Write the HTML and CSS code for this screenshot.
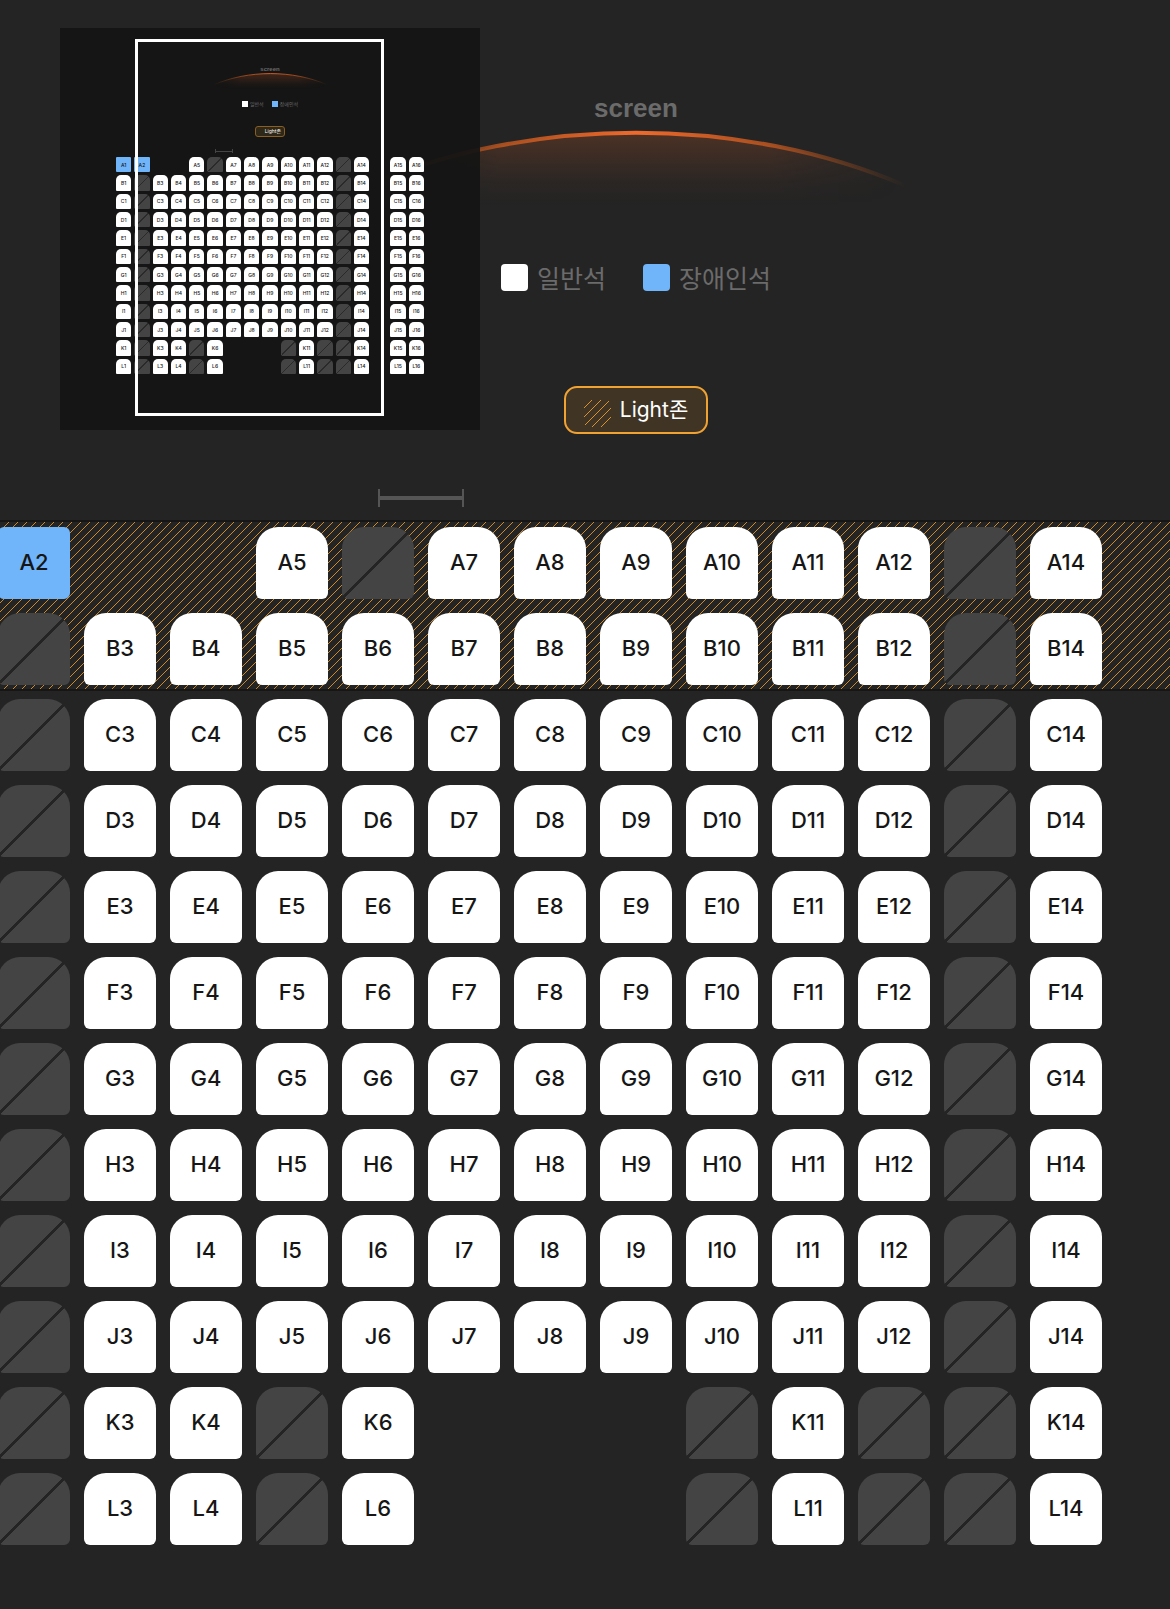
FILE: index.html
```html
<!DOCTYPE html>
<html lang="ko">
<head>
<meta charset="utf-8">
<meta name="viewport" content="width=device-width, initial-scale=1">
<title>좌석 선택</title>
<link rel="stylesheet" href="styles.css">
</head>
<body>
<main class="hall">
  <header class="stage">
    <h1 class="stage-title">screen</h1>
    <svg class="stage-arc" viewBox="0 0 540 76" aria-hidden="true">
      <defs>
        <linearGradient id="arc-line" x1="0" x2="1" y1="0" y2="0">
          <stop offset="0" stop-color="#a8501c" stop-opacity="0"/>
          <stop offset=".25" stop-color="#c4581f" stop-opacity=".8"/>
          <stop offset=".5" stop-color="#f06a2c"/>
          <stop offset=".75" stop-color="#c4581f" stop-opacity=".8"/>
          <stop offset="1" stop-color="#a8501c" stop-opacity="0"/>
        </linearGradient>
        <linearGradient id="arc-glow" x1="0" x2="0" y1="0" y2="1">
          <stop offset="0" stop-color="#f06a2c" stop-opacity=".2"/>
          <stop offset=".7" stop-color="#f06a2c" stop-opacity=".03"/>
          <stop offset="1" stop-color="#f06a2c" stop-opacity="0"/>
        </linearGradient>
        <linearGradient id="arc-fade" x1="0" x2="1" y1="0" y2="0">
          <stop offset="0" stop-color="#000"/>
          <stop offset=".25" stop-color="#fff"/>
          <stop offset=".75" stop-color="#fff"/>
          <stop offset="1" stop-color="#000"/>
        </linearGradient>
        <mask id="arc-mask"><rect width="540" height="76" fill="url(#arc-fade)"/></mask>
      </defs>
      <path d="M0 56C165 -15 375 -15 540 56V76H0Z" fill="url(#arc-glow)" mask="url(#arc-mask)"/>
      <path d="M0 56C165 -15 375 -15 540 56" fill="none" stroke="url(#arc-line)" stroke-width="4"/>
    </svg>
    <ul class="legend">
      <li class="legend-item"><span class="swatch"></span>일반석</li>
      <li class="legend-item"><span class="swatch swatch-access"></span>장애인석</li>
    </ul>
    <p class="zone">
      <svg class="zone-icon" viewBox="0 0 27 27" aria-hidden="true">
        <path d="M0 8 8 0M0 17 17 0M1 25 25 1M8 27 27 8M17 27 27 17" fill="none" stroke="#d99230"/>
      </svg>
      <span>Light존</span>
    </p>
  </header>
  <div class="entrance"></div>
  <section class="band" aria-label="Light존">
    <svg class="band-hatch" width="100%" height="100%" aria-hidden="true">
      <defs>
        <pattern id="hatch" width="9" height="9" patternUnits="userSpaceOnUse">
          <path d="M-1 10 10 -1M-1 1 1 -1M8 10 10 8" stroke="#cc8a2d" stroke-width="1"/>
        </pattern>
      </defs>
      <rect width="100%" height="100%" fill="url(#hatch)"/>
    </svg>
    <div class="seats" id="zone-seats"></div>
  </section>
  <section class="seats seats-rest" id="rest-seats" aria-label="좌석"></section>
</main>

<aside class="map" aria-label="미니맵">
  <div class="map-title">screen</div>
  <svg class="map-arc" viewBox="0 0 540 76" aria-hidden="true">
    <path d="M0 56C165 -15 375 -15 540 56V76H0Z" fill="url(#arc-glow)" mask="url(#arc-mask)"/>
    <path d="M0 56C165 -15 375 -15 540 56" fill="none" stroke="url(#arc-line)" stroke-width="4"/>
  </svg>
  <div class="map-legend">
    <span class="map-item"><span class="map-swatch"></span>일반석</span>
    <span class="map-item"><span class="map-swatch swatch-access"></span>장애인석</span>
  </div>
  <div class="map-zone">Light존</div>
  <div class="map-entrance"></div>
  <div class="map-seats" id="map-seats"></div>
  <div class="map-view"></div>
</aside>
<script src="seats.js"></script>
</body>
</html>
```
FILE: styles.css
```css
* { box-sizing: border-box; }

body {
  margin: 0;
  min-height: 100vh;
  position: relative;
  overflow-x: hidden;
  background: #242424;
  font-family: Inter, "Noto Sans CJK KR", sans-serif;
}

.hall { overflow: hidden; padding-bottom: 64px; }

/* Stage */
.stage {
  display: flex;
  flex-direction: column;
  align-items: center;
  padding: 92px 0 0 102px;
}
.stage-title {
  margin: 0;
  font: bold 26px/32px "Liberation Sans", sans-serif;
  color: #6b6b6b;
}
.stage-arc { width: 540px; height: 76px; margin-top: 6px; }

.legend {
  display: flex;
  gap: 37px;
  margin: 53px 0 0;
  padding: 0;
  list-style: none;
  color: #6b6b6b;
  font: 400 25px/36px "Noto Sans CJK KR", sans-serif;
}
.legend-item { display: flex; align-items: center; gap: 9px; }
.swatch { width: 27px; height: 27px; border-radius: 4px; background: #fff; }
.swatch-access { background: #70b5f9; }

.zone {
  display: flex;
  align-items: center;
  gap: 9px;
  height: 48px;
  margin: 91px 0 0;
  padding: 0 18px;
  border: 2px solid #f0a233;
  border-radius: 13px;
  background: #403424;
  color: #fff;
  font-size: 21px;
  line-height: 32px;
}
.zone-icon { width: 27px; height: 27px; margin-top: 6px; }

.entrance {
  width: 86px;
  height: 18px;
  margin: 55px 0 13px 378px;
  border: solid #555;
  border-width: 0 2px;
  background: linear-gradient(#555, #555) center / 100% 4px no-repeat;
}

/* Seats */
.band {
  position: relative;
  padding: 5px 0 4px;
  border: solid #161616;
  border-width: 2px 0;
}
.band-hatch { position: absolute; inset: 0; }

.seats {
  position: relative;
  display: grid;
  grid-template-columns: repeat(13, 72px);
  grid-auto-rows: 72px;
  gap: 14px;
  margin-left: -2px;
}
.seats-rest { margin-top: 8px; }

.seat {
  padding: 0 0 2px;
  border: 0;
  border-radius: 22px 22px 6px 6px;
  background: #fff;
  color: #161616;
  font: 500 22px/28px Inter, sans-serif;
}
.seat-access { border-radius: 6px; background: #70b5f9; }
.seat-sold {
  background: linear-gradient(to bottom right, #444 48%, #242424 48%, #242424 51%, #444 51%);
}

/* Minimap */
.map {
  position: absolute;
  top: 28px;
  left: 60px;
  display: flex;
  flex-direction: column;
  align-items: center;
  width: 420px;
  height: 402px;
  padding-top: 37px;
  background: rgba(20, 20, 20, .93);
  color: #6b6b6b;
  font-size: 5px;
  line-height: 8px;
}
.map-title { font: bold 6px/8px "Liberation Sans", sans-serif; }
.map-arc { width: 115px; height: 16px; }
.map-legend { display: flex; gap: 8px; margin-top: 11px; }
.map-item { display: flex; align-items: center; gap: 2px; }
.map-swatch { width: 6px; height: 6px; background: #fff; }
.map-swatch.swatch-access { background: #70b5f9; }
.map-zone {
  width: 30px;
  height: 11px;
  margin-top: 18px;
  padding-right: 3px;
  border: 1px solid #8a6022;
  border-radius: 3px;
  background: #2f2717;
  color: #fff;
  text-align: right;
}
.map-entrance {
  width: 18px;
  height: 4px;
  margin: 12px 92px 4px 0;
  border: solid #444;
  border-width: 0 1px;
  background: linear-gradient(#444, #444) center / 100% 1px no-repeat;
}
.map-seats {
  display: grid;
  grid-template-columns: repeat(17, 1fr);
  grid-template-rows: repeat(12, 1fr);
  gap: 3px;
  width: 308px;
  height: 217px;
}
.map-seat {
  display: flex;
  align-items: center;
  justify-content: center;
  min-width: 0;
  min-height: 0;
  border-radius: 5px 5px 1px 1px;
  background: #fff;
  color: #161616;
  font-weight: 500;
}
.map-seat-access { border-radius: 1px; background: #70b5f9; }
.map-seat-sold {
  background: linear-gradient(to bottom right, #444 47%, #2a2a2a 47%, #2a2a2a 53%, #444 53%);
}
.map-view {
  position: absolute;
  top: 11px;
  left: 75px;
  width: 249px;
  height: 377px;
  border: 3px solid #fff;
}
```
FILE: seats.js
```js
// One character per seat number 1-16: o open, x sold, a accessible, . no seat
const plan = {
  A: 'aa..oxooooooxooo',
  B: 'oxooooooooooxooo',
  C: 'oxooooooooooxooo',
  D: 'oxooooooooooxooo',
  E: 'oxooooooooooxooo',
  F: 'oxooooooooooxooo',
  G: 'oxooooooooooxooo',
  H: 'oxooooooooooxooo',
  I: 'oxooooooooooxooo',
  J: 'oxooooooooooxooo',
  K: 'oxooxo...xoxxooo',
  L: 'oxooxo...xoxxooo'
};
const FIRST = 2;
const LAST = 14;
const suffix = { o: '', x: '-sold', a: '-access' };

function addSeat(parent, tag, base, row, number, kind, column, line) {
  const seat = document.createElement(tag);
  seat.className = suffix[kind] ? `${base} ${base}${suffix[kind]}` : base;
  seat.style.gridArea = `${line} / ${column}`;
  if (kind !== 'x') seat.textContent = row + number;
  if (tag === 'button') {
    seat.type = 'button';
    if (kind === 'x') {
      seat.disabled = true;
      seat.setAttribute('aria-label', `${row}${number} 선택 불가`);
    }
  }
  parent.append(seat);
}

const zone = document.getElementById('zone-seats');
const rest = document.getElementById('rest-seats');
const map = document.getElementById('map-seats');

Object.entries(plan).forEach(([row, kinds], r) => {
  [...kinds].forEach((kind, i) => {
    if (kind === '.') return;
    const number = i + 1;
    // The aisle takes the column between seats 14 and 15.
    addSeat(map, 'span', 'map-seat', row, number, kind, number > 14 ? number + 1 : number, r + 1);
    if (number >= FIRST && number <= LAST) {
      addSeat(r < 2 ? zone : rest, 'button', 'seat', row, number, kind, number - FIRST + 1, r < 2 ? r + 1 : r - 1);
    }
  });
});
```
